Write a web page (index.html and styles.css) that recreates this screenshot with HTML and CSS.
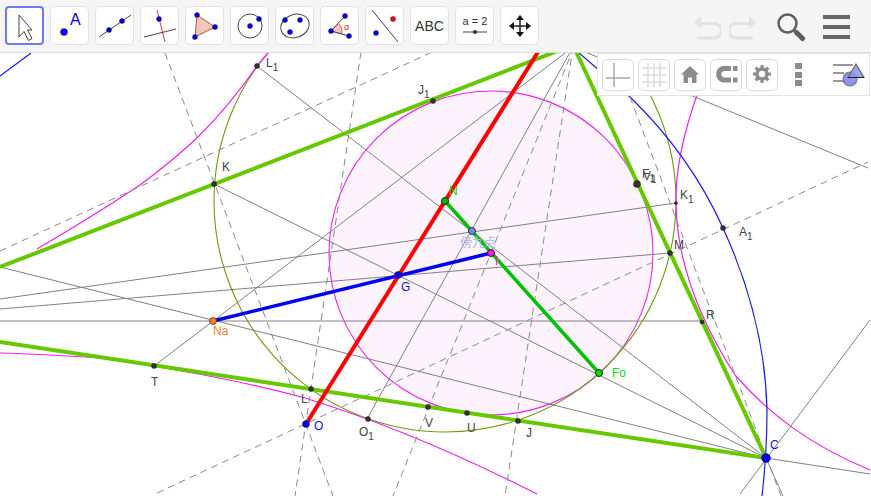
FILE: index.html
```html
<!DOCTYPE html>
<html lang="zh">
<head>
<meta charset="utf-8">
<title>GeoGebra</title>
<link rel="stylesheet" href="styles.css">
</head>
<body>
<div class="app">
  <header class="toolbar">
    <div class="tools">
      <button class="tool selected"><svg viewBox="0 0 35 35"><path class="cursor" d="M12 7v22l5-5.500 4.500 9 3.500-2-4.500-8.500H25z"/></svg></button>
      <button class="tool"><svg viewBox="0 0 37 37"><circle class="pt" cx="13" cy="25" r="3.500"/><text class="ico-a" x="19" y="18">A</text></svg></button>
      <button class="tool"><svg viewBox="0 0 37 37"><path class="ln" d="M3 30 35 8"/><circle class="pt" cx="13" cy="23" r="2.500"/><circle class="pt" cx="26" cy="14" r="2.500"/></svg></button>
      <button class="tool"><svg viewBox="0 0 37 37"><path class="rl" d="M16 3l8 32"/><path class="ln" d="M3 30l32-8"/><circle class="pt" cx="18" cy="12" r="2.500"/></svg></button>
      <button class="tool"><svg viewBox="0 0 37 37"><path class="poly" d="M11 8 29 20 9 30z"/><circle class="pt" cx="11" cy="8" r="2.500"/><circle class="pt" cx="29" cy="20" r="2.500"/><circle class="pt" cx="9" cy="30" r="2.500"/></svg></button>
      <button class="tool"><svg viewBox="0 0 37 37"><circle class="cr" cx="19" cy="19" r="12"/><circle class="pt" cx="19" cy="19" r="2.500"/><circle class="pt" cx="28" cy="12" r="2.500"/></svg></button>
      <button class="tool"><svg viewBox="0 0 37 37"><ellipse class="cr" cx="19" cy="19" rx="14.500" ry="11.500" transform="rotate(-20 19 19)"/><circle class="pt" cx="9" cy="13" r="2.500"/><circle class="pt" cx="24" cy="13" r="2.500"/><circle class="pt" cx="14" cy="25" r="2.500"/></svg></button>
      <button class="tool"><svg viewBox="0 0 37 37"><path class="ang" d="M10 24 17.500 16.500a11 11 0 0 1 3 10.500z"/><path class="ln" d="M24 9 10 24 28 29"/><text class="ico-alpha" x="23" y="23">α</text><circle class="pt" cx="24" cy="9" r="2.500"/><circle class="pt" cx="10" cy="24" r="2.500"/><circle class="pt" cx="28" cy="29" r="2.500"/></svg></button>
      <button class="tool"><svg viewBox="0 0 37 37"><path class="ln" d="M6 3l26 32"/><circle class="ptr" cx="27" cy="12" r="2.500"/><circle class="pt" cx="10" cy="26" r="2.500"/></svg></button>
      <button class="tool text-tool">ABC</button>
      <button class="tool"><svg viewBox="0 0 37 37"><text class="ico-slider" x="19" y="18">a = 2</text><path class="ln" d="M7 25h24"/><circle class="dk" cx="19" cy="25" r="2"/></svg></button>
      <button class="tool"><svg viewBox="0 0 37 37"><path class="mv" d="M19 11v16M11 19h16"/><path class="mva" d="M19 8l-4 5h8zM19 30l-4-5h8zM8 19l5-4v8zM30 19l-5-4v8z"/></svg></button>
    </div>
    <div class="actions">
      <svg class="undo" viewBox="0 0 28 25"><path d="M8 1 1 7.500 8 14v-4h13a5 5 0 0 1 0 11.500H4V24.500h17a8 8 0 0 0 0-17.500H8z"/></svg>
      <svg class="undo" viewBox="0 0 28 25"><path d="M20 1l7 6.500L20 14v-4H7a5 5 0 0 0 0 11.500h17V24.500H7a8 8 0 0 1 0-17.500h13z"/></svg>
      <svg class="search" viewBox="0 0 30 30"><circle cx="11.500" cy="11.500" r="9" /><path d="M18 18l2 2"/><path class="handle" d="M20.500 20.500l6 6"/></svg>
      <div class="menu"><span></span><span></span><span></span></div>
    </div>
  </header>
  <main class="canvas">
    <svg class="board" viewBox="0 53 871 443">
      <circle class="incircle" cx="491" cy="253" r="162"/>
      <circle class="olive" cx="445" cy="201" r="231"/>
      <path class="magenta" d="M37 249Q95 215 140 185Q170 163 197 138Q230 105 257 66L269 52"/>
      <path class="magenta" d="M0 353C40 354 70 356 100 358C170 368 240 380 305 398C370 418 450 450 537 494"/>
      <path class="magenta" d="M697 95C683 135 675 175 676 205C677 250 690 305 735 375C770 415 810 445 870 470"/>
      <path class="blue" d="M0 76 31 53"/>
      <path class="blue" d="M578 52 630 97Q690 155 723 228Q765 320 767 410C767 435 765 470 762 496"/>

      <g class="gray">
        <path d="M214 184 766 458"/>
        <path d="M257 66 766 458"/>
        <path d="M0 267 766 458"/>
        <path d="M0 321H702"/>
        <path d="M154 366 573 47"/>
        <path d="M0 299 676 203"/>
        <path d="M0 309 670 253"/>
        <path d="M367 419 573 47"/>
        <path d="M573 47 868 168"/>
        <path d="M740 494 870 320"/>
        <path d="M766 458 870 474"/>
        <path d="M766 458 783 496"/>
      </g>
      <g class="dash">
        <path d="M165 53 333 496"/>
        <path d="M361 52 295 496"/>
        <path d="M157 493 868 162"/>
        <path d="M0 251 430 53"/>
        <path d="M573 47 505 496"/>
        <path d="M574 47 393 496"/>
        <path d="M613 52 781 496"/>
      </g>

      <path class="side" d="M0 267 573 45 766 458 0 342"/>
      <path class="red" d="M306 424 538 52"/>
      <path class="bluethick" d="M213 321 491 253"/>
      <path class="lime" d="M445 201 599 373"/>

      <g class="dots">
        <circle cx="257" cy="66" r="2.500"/><circle cx="433" cy="101" r="2.500"/><circle cx="214" cy="184" r="2.500"/>
        <circle cx="637" cy="184" r="3.500"/><circle cx="676" cy="203" r="1.500"/><circle cx="723" cy="228" r="2.500"/>
        <circle cx="670" cy="253" r="2.500"/><circle cx="702" cy="322" r="2"/><circle cx="154" cy="366" r="2.500"/>
        <circle cx="311" cy="389" r="2.500"/><circle cx="368" cy="419" r="2.500"/><circle cx="428" cy="407" r="2.500"/>
        <circle cx="467" cy="413" r="2.500"/><circle cx="518" cy="421" r="2.500"/>
      </g>
      <circle class="p-blue" cx="398" cy="275" r="3.500"/>
      <circle class="p-blue" cx="306" cy="424" r="3.500"/>
      <circle class="p-blue" cx="766" cy="458" r="4.500"/>
      <circle class="p-green" cx="445" cy="201" r="3.500"/>
      <circle class="p-peri" cx="472" cy="231" r="3.500"/>
      <circle class="p-mag" cx="491" cy="253" r="3.500"/>
      <circle class="p-fo" cx="599" cy="373" r="3.500"/>
      <circle class="p-orange" cx="213" cy="321" r="3.500"/>

      <g class="lbl">
        <text x="266" y="67">L<tspan class="sub" dy="4">1</tspan></text>
        <text x="418" y="94">J<tspan class="sub" dy="4">1</tspan></text>
        <text x="222" y="171">K</text>
        <text x="642" y="178">F<tspan class="sub" dy="4">1</tspan></text>
        <text x="643" y="180">V<tspan class="sub" dy="3">1</tspan></text>
        <text x="680" y="199">K<tspan class="sub" dy="4">1</tspan></text>
        <text x="739" y="236">A<tspan class="sub" dy="4">1</tspan></text>
        <text x="674" y="249">M</text>
        <text x="706" y="319">R</text>
        <text x="151" y="386">T</text>
        <text x="301" y="403">L</text>
        <text x="359" y="436">O<tspan class="sub" dy="4">1</tspan></text>
        <text x="425" y="427">V</text>
        <text x="467" y="432">U</text>
        <text x="526" y="437">J</text>
      </g>
      <text class="l-blue" x="401" y="291">G</text>
      <text class="l-blue" x="314" y="430">O</text>
      <text class="l-blue" x="770" y="449">C</text>
      <text class="l-green" x="449" y="195">N</text>
      <text class="l-mag" x="495" y="265">I</text>
      <text class="l-fo" x="612" y="377">Fo</text>
      <text class="l-orange" x="213" y="335">Na</text>
      <text class="l-peri" x="460" y="247">傍九点</text>
    </svg>

    <aside class="stylebar">
      <button class="sbtn"><svg viewBox="0 0 30 30"><path class="axis" d="M11 3V27M3 18H27"/></svg></button>
      <button class="sbtn"><svg viewBox="0 0 30 30"><path class="grid" d="M9 3v24M15 3v24M21 3v24M3 8h24M3 15h24M3 22h24"/></svg></button>
      <button class="sbtn"><svg viewBox="0 0 30 30"><path class="gly" d="M15 6 6 14.500h2.500V23H13v-5.500h4V23h4.500v-8.500H24z"/></svg></button>
      <button class="sbtn"><svg viewBox="0 0 30 30"><path class="mag" d="M20 8.500h-8a6 6 0 0 0 0 11.500h8"/><path class="gly" d="M22 6h4.500v5H22zM22 17.500h4.500v5H22z"/></svg></button>
      <button class="sbtn"><svg viewBox="0 0 30 30"><circle class="gear" cx="15" cy="14" r="5"/><path class="gear-t" d="M15 5v4M15 19v4M6 14h4M20 14h4M8.600 7.600l2.800 2.800M18.600 17.600l2.800 2.800M21.400 7.600l-2.800 2.800M11.400 17.600l-2.800 2.800"/></svg></button>
      <div class="kebab"><span></span><span></span><span></span></div>
      <svg class="viewicon" viewBox="0 0 32 24"><path class="lines" d="M0 2h20M0 10h11M0 18h11"/><circle class="vc" cx="17" cy="16" r="7"/><path class="vt" d="M23 1l8 13.500H15z"/><path class="vt2" d="M15 14.500h16"/></svg>
    </aside>
  </main>
</div>
</body>
</html>
```
FILE: styles.css
```css
* { box-sizing: border-box; }
html, body { margin: 0; padding: 0; background: #fff; }
.app { width: 871px; height: 496px; display: flex; flex-direction: column; overflow: hidden; font-family: "Liberation Sans", "Noto Sans CJK SC", sans-serif; }
.toolbar { height: 53px; flex: none; background: #f5f5f5; border-bottom: 1px solid #dcdcdc; display: flex; justify-content: space-between; padding: 6px 0 0 5px; }
.tools { display: flex; gap: 6px; align-items: flex-start; }
.tool { width: 39px; height: 39px; padding: 0; background: #fff; border: 1px solid #e2e2e2; border-radius: 5px; display: block; }
.tool svg { display: block; width: 37px; height: 37px; }
.tool.selected { border: 2px solid #6e79f5; border-radius: 4px; }
.tool.selected svg { width: 35px; height: 35px; }
.text-tool { font: 14px "Liberation Sans", sans-serif; color: #333; }
.cursor { fill: #fff; stroke: #444; stroke-width: 1; }
.pt { fill: #0000e0; stroke: #1a1a5a; stroke-width: .5; }
.ptr { fill: #e01010; stroke: #501010; stroke-width: .5; }
.dk { fill: #333; }
.ln { fill: none; stroke: #444; stroke-width: 1; }
.rl { fill: none; stroke: #f03030; stroke-width: 1; }
.cr { fill: none; stroke: #444; stroke-width: 1; }
.poly { fill: #f2c6bc; stroke: #a8563c; stroke-width: 1; }
.ang { fill: #f6c4c4; stroke: #e06060; stroke-width: 1; }
.ico-a { font: 16px "Liberation Sans", sans-serif; fill: #0000e0; }
.ico-alpha { font: 9px "Liberation Sans", sans-serif; fill: #e03030; }
.ico-slider { font: 11px "Liberation Sans", sans-serif; fill: #333; text-anchor: middle; }
.mv { stroke: #222; stroke-width: 1.500; fill: none; }
.mva { fill: #111; }
.actions { display: flex; align-items: center; height: 42px; padding-right: 21px; }
.undo { width: 28px; height: 25px; fill: #e2e2e2; margin-right: 8px; flex: none; }
.search { width: 30px; height: 30px; margin: 0 0 0 11px; fill: none; stroke: #5e5e5e; stroke-width: 2.500; flex: none; }
.search .handle { stroke-width: 5; stroke-linecap: round; }
.menu { width: 27px; margin-left: 17px; display: flex; flex-direction: column; gap: 6px; flex: none; }
.menu span { display: block; height: 4px; background: #666; }
.canvas { flex: 1; position: relative; min-height: 0; }
.board { position: absolute; left: 0; top: 0; width: 871px; height: 443px; display: block; }
.incircle { fill: #fdf3fd; stroke: #f020f0; stroke-width: 1.100; }
.olive { fill: none; stroke: #6f9a10; stroke-width: 1.100; }
.magenta { fill: none; stroke: #f020f0; stroke-width: 1.200; }
.blue { fill: none; stroke: #1a1aee; stroke-width: 1.200; }
.gray path { fill: none; stroke: #808080; stroke-width: 1; }
.dash path { fill: none; stroke: #8a8a8a; stroke-width: 1; stroke-dasharray: 7 5; }
.side { fill: none; stroke: #66c800; stroke-width: 4; }
.red { stroke: #ff0000; stroke-width: 4; }
.bluethick { stroke: #0000ee; stroke-width: 3.500; }
.lime { stroke: #00c000; stroke-width: 3.500; }
.dots circle { fill: #333; stroke: #111; stroke-width: .5; }
.p-blue { fill: #0000e0; stroke: #101060; stroke-width: .5; }
.p-green { fill: #10b010; stroke: #103010; stroke-width: 1; }
.p-peri { fill: #7a8ce8; stroke: #303050; stroke-width: 1; }
.p-mag { fill: #f020e0; stroke: #301030; stroke-width: 1; }
.p-fo { fill: #10d810; stroke: #103010; stroke-width: 1; }
.p-orange { fill: #ff7f20; stroke: #603010; stroke-width: .8; }
.lbl text { font-size: 12px; fill: #444; }
.lbl .sub { font-size: 10px; }
.l-blue { font-size: 12px; fill: #1010e0; }
.l-green { font-size: 12px; fill: #10d010; }
.l-mag { font-size: 12px; fill: #f020e0; }
.l-fo { font-size: 12px; fill: #10d810; }
.l-orange { font-size: 12px; fill: #ff8030; }
.l-peri { font-size: 12px; fill: #a8b8f8; }
.stylebar { position: absolute; left: 597px; top: 0; width: 273px; height: 43px; background: #fff; border: 1px solid #e4e4e4; display: flex; align-items: center; padding: 0 0 0 4px; gap: 4px; }
.sbtn { width: 32px; height: 32px; padding: 0; background: #fff; border: 1px solid #dcdcdc; border-radius: 5px; }
.sbtn svg { display: block; width: 30px; height: 30px; }
.axis { stroke: #a8a8a8; stroke-width: 1.500; fill: none; }
.grid { stroke: #dcdcdc; stroke-width: 1.500; fill: none; }
.gly { fill: #8c8c8c; }
.mag { fill: none; stroke: #8c8c8c; stroke-width: 5; }
.gear { fill: none; stroke: #8c8c8c; stroke-width: 3.500; }
.gear-t { stroke: #8c8c8c; stroke-width: 3; fill: none; }
.kebab { width: 7px; margin-left: 13px; display: flex; flex-direction: column; gap: 2.500px; }
.kebab span { display: block; height: 6px; background: #8c8c8c; }
.viewicon { width: 32px; height: 24px; margin-left: 27px; }
.lines { stroke: #999; stroke-width: 1.800; fill: none; }
.vc { fill: #8c94f0; stroke: #777; stroke-width: 1.200; }
.vt { fill: #8c94f0; fill-opacity: .85; stroke: #666; stroke-width: 1.200; }
.vt2 { stroke: #222; stroke-width: 1; }
```
